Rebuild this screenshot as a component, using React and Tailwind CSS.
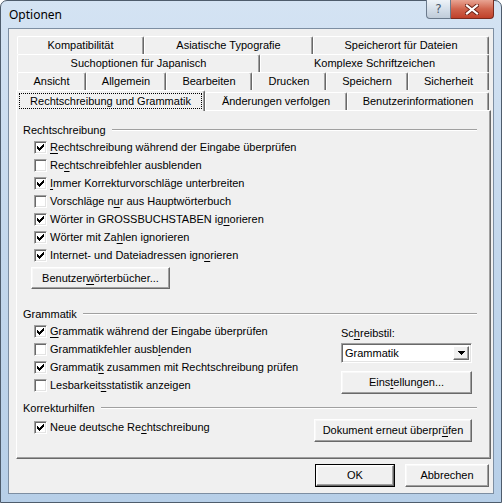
import React from "react";

function L({ t }) {
  const i = t.indexOf("&");
  if (i < 0) return <>{t}</>;
  return (
    <>
      {t.slice(0, i)}
      <span className="underline decoration-1 underline-offset-[2px]">{t[i + 1]}</span>
      {t.slice(i + 2)}
    </>
  );
}

function CheckMark() {
  const cols = [2, 3, 4, 3, 2, 1, 0];
  return (
    <svg width="7" height="7" viewBox="0 0 7 7" shapeRendering="crispEdges">
      {cols.map((y, x) => (
        <rect key={x} x={x} y={y} width="1" height="3" fill="#000" />
      ))}
    </svg>
  );
}

function Check({ checked }) {
  return (
    <span className="w-[13px] h-[13px] shrink-0 bg-white border border-t-[#a0a0a0] border-l-[#a0a0a0] border-r-white border-b-white shadow-[inset_1px_1px_0_#696969,inset_-1px_-1px_0_#e3e3e3] flex items-center justify-center">
      {checked && <CheckMark />}
    </span>
  );
}

function Row({ checked, t }) {
  return (
    <div className="h-[18px] flex items-center pl-[11px]">
      <Check checked={checked} />
      <span className="ml-[3px] whitespace-nowrap">
        <L t={t} />
      </span>
    </div>
  );
}

function Group({ title }) {
  return (
    <div className="h-[16px] flex items-center">
      <span className="whitespace-nowrap">{title}</span>
      <div className="flex-1 ml-[6px] h-[2px] border-t border-t-[#a0a0a0] border-b border-b-white" />
    </div>
  );
}

const btn =
  "flex items-center justify-center bg-[#f0f0f0] border border-t-white border-l-white border-r-[#696969] border-b-[#696969] shadow-[inset_-1px_-1px_0_#a0a0a0,inset_1px_1px_0_#f8f8f8] whitespace-nowrap";

const tab =
  "h-[18px] shrink-0 flex items-center justify-center bg-[#f0f0f0] border-t border-l border-r border-t-white border-l-white border-r-[#696969] shadow-[inset_-1px_0_0_#a0a0a0] rounded-t-[2px] whitespace-nowrap";

export default function App() {
  return (
    <div className="w-[502px] h-[503px] font-['Liberation_Sans',Arial,sans-serif] text-[11px] text-black overflow-hidden">
      <div className="w-[502px] h-[503px] flex flex-col px-[7px] pb-[8px] border border-[#4e5c6c] rounded-t-[7px] bg-gradient-to-b from-[#d4e3f3] via-[#c3d7ec] to-[#b7cfe8] relative">
        {/* title bar */}
        <div className="h-[27px] flex items-center pl-[1px] shrink-0">
          <span className="font-['Noto_Sans',sans-serif] text-[12px] text-black">Optionen</span>
        </div>
        <div className="absolute top-[-1px] right-[7px] flex">
          <div className="w-[25px] h-[19px] rounded-bl-[4px] border border-[#6b7a8c] border-t-0 bg-gradient-to-b from-[#eef3f8] via-[#d5dfea] to-[#c0ccd9] flex items-center justify-center">
            <span className="font-['DejaVu_Sans',sans-serif] text-[12px] leading-none text-[#4a5a6c]">?</span>
          </div>
          <div className="w-[43px] h-[19px] rounded-br-[4px] border border-[#7a2a1e] border-t-0 border-l-0 bg-gradient-to-b from-[#e8a493] via-[#d0644d] to-[#c0402a] flex items-center justify-center">
            <svg width="14" height="11" viewBox="0 0 14 11">
              <path d="M2 1.5 L12 9.5 M12 1.5 L2 9.5" stroke="#6a2015" strokeWidth="4" strokeLinecap="square" />
              <path d="M2 1.5 L12 9.5 M12 1.5 L2 9.5" stroke="#ffffff" strokeWidth="2.2" strokeLinecap="square" />
            </svg>
          </div>
        </div>

        {/* client */}
        <div className="h-[466px] w-[486px] shrink-0 bg-[#f0f0f0] border border-[#7d8ea2] flex flex-col pt-[7px]">
          {/* tabs */}
          <div className="flex flex-col pl-[7px]">
            <div className="flex ml-[1px]">
              <div className={tab + " w-[127px]"}>Kompatibilität</div>
              <div className={tab + " w-[169px]"}>Asiatische Typografie</div>
              <div className={tab + " w-[176px]"}>Speicherort für Dateien</div>
            </div>
            <div className="flex ml-[1px]">
              <div className={tab + " w-[243px]"}>Suchoptionen für Japanisch</div>
              <div className={tab + " w-[229px]"}>Komplexe Schriftzeichen</div>
            </div>
            <div className="flex ml-[1px]">
              <div className={tab + " w-[69px]"}>Ansicht</div>
              <div className={tab + " w-[80px]"}>Allgemein</div>
              <div className={tab + " w-[86px]"}>Bearbeiten</div>
              <div className={tab + " w-[74px]"}>Drucken</div>
              <div className={tab + " w-[82px]"}>Speichern</div>
              <div className={tab + " w-[81px]"}>Sicherheit</div>
            </div>
            <div className="flex items-end h-[20px]">
              <div className="w-[189px] h-[21px] -mb-[1px] relative z-10 shrink-0 bg-[#f0f0f0] border-t border-l border-r border-t-white border-l-white border-r-[#696969] shadow-[inset_-1px_0_0_#a0a0a0] rounded-t-[2px] px-[2px] pt-[2px] pb-[2px]">
                <div className="h-full border border-dotted border-black flex items-center justify-center whitespace-nowrap">
                  Rechtschreibung und Grammatik
                </div>
              </div>
              <div className={tab + " w-[142px]"}>Änderungen verfolgen</div>
              <div className={tab + " w-[142px]"}>Benutzerinformationen</div>
            </div>

            {/* panel */}
            <div className="w-[475px] h-[349px] bg-[#f0f0f0] border border-t-white border-l-white border-r-[#696969] border-b-[#696969] shadow-[inset_-1px_-1px_0_#a0a0a0] pl-[6px] pr-[13px] pt-[11px] flex flex-col">
              <Group title="Rechtschreibung" />
              <Row checked t="&Rechtschreibung während der Eingabe überprüfen" />
              <Row t="Re&chtschreibfehler ausblenden" />
              <Row checked t="&Immer Korrekturvorschläge unterbreiten" />
              <Row t="Vorschläge n&ur aus Hauptwörterbuch" />
              <Row checked t="Wörter in GROSSBUCHSTABEN ig&norieren" />
              <Row checked t="Wörter mit Za&hlen ignorieren" />
              <Row checked t="Internet- und Dateiadressen ign&orieren" />
              <div className="pl-[8px] mt-[3px]">
                <div className={btn + " w-[139px] h-[22px]"}>
                  <L t="Benutzer&wörterbücher..." />
                </div>
              </div>

              <div className="mt-[17px]">
                <Group title="Grammatik" />
              </div>
              <div className="flex">
                <div className="flex-1 flex flex-col">
                  <Row checked t="&Grammatik während der Eingabe überprüfen" />
                  <Row t="Grammatikfehler ausb&lenden" />
                  <Row checked t="Grammati&k zusammen mit Rechtschreibung prüfen" />
                  <Row t="Lesbarkeit&sstatistik anzeigen" />
                </div>
                <div className="w-[131px] mr-[5px] flex flex-col">
                  <div className="h-[16px] mt-[3px] flex items-center">
                    <span>
                      <L t="Sc&hreibstil:" />
                    </span>
                  </div>
                  <div className="h-[20px] mt-[2px] bg-white border border-t-[#a0a0a0] border-l-[#a0a0a0] border-r-white border-b-white shadow-[inset_1px_1px_0_#696969,inset_-1px_-1px_0_#e3e3e3] flex items-stretch p-[2px]">
                    <div className="flex-1 flex items-center pl-[1px]">Grammatik</div>
                    <div className="w-[16px] bg-[#f0f0f0] border border-t-white border-l-white border-r-[#696969] border-b-[#696969] shadow-[inset_-1px_-1px_0_#a0a0a0] flex items-center justify-center">
                      <svg width="7" height="4" viewBox="0 0 7 4" shapeRendering="crispEdges">
                        <path d="M0 0 H7 L3.5 4 Z" fill="#000" />
                      </svg>
                    </div>
                  </div>
                  <div className={btn + " h-[23px] mt-[8px]"}>
                    <L t="Eins&tellungen..." />
                  </div>
                </div>
              </div>

              <div className="mt-[6px]">
                <Group title="Korrekturhilfen" />
              </div>
              <div className="flex items-start mt-[2px]">
                <div className="flex-1">
                  <Row checked t="Neue deutsche Re&chtschreibung" />
                </div>
                <div className={btn + " w-[158px] h-[23px] mt-[1px] mr-[5px]"}>
                  <L t="Dokument erneut überpr&üfen" />
                </div>
              </div>
            </div>
          </div>

          {/* bottom buttons */}
          <div className="flex justify-end gap-[10px] mt-[5px] pr-[4px]">
            <div className="w-[80px] h-[23px] border border-black">
              <div className={btn + " w-full h-full"}>OK</div>
            </div>
            <div className={btn + " w-[84px] h-[23px]"}>Abbrechen</div>
          </div>
        </div>
      </div>
    </div>
  );
}
